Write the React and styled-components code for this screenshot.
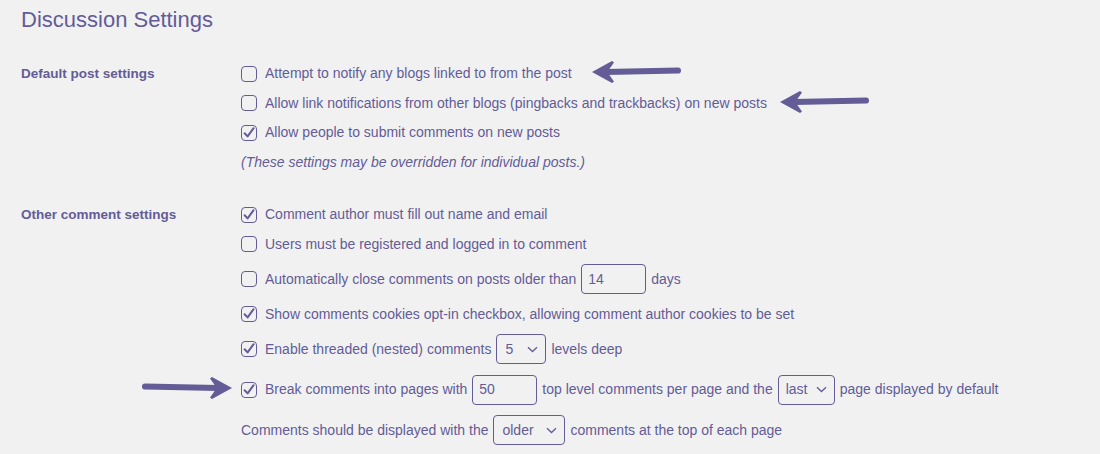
import React from 'react'
import styled, { createGlobalStyle, css } from 'styled-components'

const ink = '#635c97'

const GlobalStyle = createGlobalStyle`
  html, body {
    margin: 0;
    padding: 0;
    background: #f1f1f1;
  }
  body {
    font-family: "Liberation Sans", Arial, sans-serif;
    font-size: 14px;
    color: ${ink};
  }
`

const Page = styled.div`
  position: relative;
  width: 1100px;
  height: 454px;
  box-sizing: border-box;
  padding: 6px 0 0 21px;
  overflow: hidden;
`

const Title = styled.h1`
  margin: 0 0 30px;
  font-size: 22px;
  line-height: 28px;
  font-weight: 400;
`

const Section = styled.div`
  display: grid;
  grid-template-columns: 220px 1fr;
  & + & {
    margin-top: 33.5px;
  }
`

const SectionLabel = styled.div`
  font-size: 13.5px;
  font-weight: 700;
  line-height: 19px;
`

const Options = styled.div`
  display: flex;
  flex-direction: column;
  gap: 10.5px;
`

const Option = styled.label`
  display: flex;
  align-items: center;
  min-height: 19px;
  line-height: 19px;
  white-space: nowrap;
`

const Note = styled.div`
  font-style: italic;
  line-height: 19px;
`

const Box = styled.span`
  display: inline-flex;
  align-items: center;
  justify-content: center;
  width: 16px;
  height: 16px;
  box-sizing: border-box;
  border: 1px solid ${ink};
  border-radius: 4px;
  margin-right: 8px;
  flex: none;
  svg {
    display: block;
  }
`

const Field = styled.span`
  display: inline-flex;
  align-items: center;
  width: ${p => p.$width}px;
  height: 30px;
  box-sizing: border-box;
  border: 1px solid ${ink};
  border-radius: 4px;
  padding-left: ${p => p.$pad || 6}px;
  margin: 0 5px;
  flex: none;
  ${p => p.$select && css`
    justify-content: space-between;
    padding-right: 7px;
  `}
`

const Check = ({ on }) => (
  <Box>
    {on && (
      <svg width="14" height="14" viewBox="0 0 14 14">
        <path d="M2.6 7.2 L5.6 10.4 L11.6 2.2" fill="none" stroke={ink} strokeWidth="2" strokeLinecap="round" strokeLinejoin="round" />
      </svg>
    )}
  </Box>
)

const Chevron = () => (
  <svg width="11" height="7" viewBox="0 0 11 7">
    <path d="M1 1.2 L5.5 5.5 L10 1.2" fill="none" stroke={ink} strokeWidth="1.3" />
  </svg>
)

const Dropdown = ({ width, pad, children }) => (
  <Field $width={width} $pad={pad} $select>
    <span>{children}</span>
    <Chevron />
  </Field>
)

const ArrowWrap = styled.svg`
  position: absolute;
  left: ${p => p.$x}px;
  top: ${p => p.$y}px;
  ${p => p.$right && css`
    transform: scaleX(-1);
  `}
`

// hand-drawn style annotation arrow, points left unless flipped
const Arrow = ({ x, y, length, right }) => (
  <ArrowWrap $x={x} $y={y} $right={right} width={length} height="24" viewBox={`0 0 ${length} 24`}>
    <path d="M0 12 L20 1 L22 2.5 L17 9.5 L17 14.5 L22 21.5 L20 23 Z" fill={ink} />
    <line x1="14" y1="12" x2={length - 3} y2="10.5" stroke={ink} strokeWidth="6" strokeLinecap="round" />
  </ArrowWrap>
)

export default function App() {
  return (
    <>
      <GlobalStyle />
      <Page>
        <Title>Discussion Settings</Title>

        <Section>
          <SectionLabel>Default post settings</SectionLabel>
          <Options>
            <Option><Check />Attempt to notify any blogs linked to from the post</Option>
            <Option><Check />Allow link notifications from other blogs (pingbacks and trackbacks) on new posts</Option>
            <Option><Check on />Allow people to submit comments on new posts</Option>
            <Note>(These settings may be overridden for individual posts.)</Note>
          </Options>
        </Section>

        <Section>
          <SectionLabel>Other comment settings</SectionLabel>
          <Options>
            <Option><Check on />Comment author must fill out name and email</Option>
            <Option><Check />Users must be registered and logged in to comment</Option>
            <Option>
              <Check />Automatically close comments on posts older than
              <Field $width={65}>14</Field>days
            </Option>
            <Option><Check on />Show comments cookies opt-in checkbox, allowing comment author cookies to be set</Option>
            <Option>
              <Check on />Enable threaded (nested) comments
              <Dropdown width={50} pad={8}>5</Dropdown>levels deep
            </Option>
            <Option>
              <Check on />Break comments into pages with
              <Field $width={65}>50</Field>top level comments per page and the
              <Dropdown width={57} pad={7}>last</Dropdown>page displayed by default
            </Option>
            <Option>
              Comments should be displayed with the
              <Dropdown width={72} pad={8}>older</Dropdown>comments at the top of each page
            </Option>
          </Options>
        </Section>

        <Arrow x={592} y={60} length={89} />
        <Arrow x={780} y={90} length={89} />
        <Arrow x={142} y={376} length={90} right />
      </Page>
    </>
  )
}
